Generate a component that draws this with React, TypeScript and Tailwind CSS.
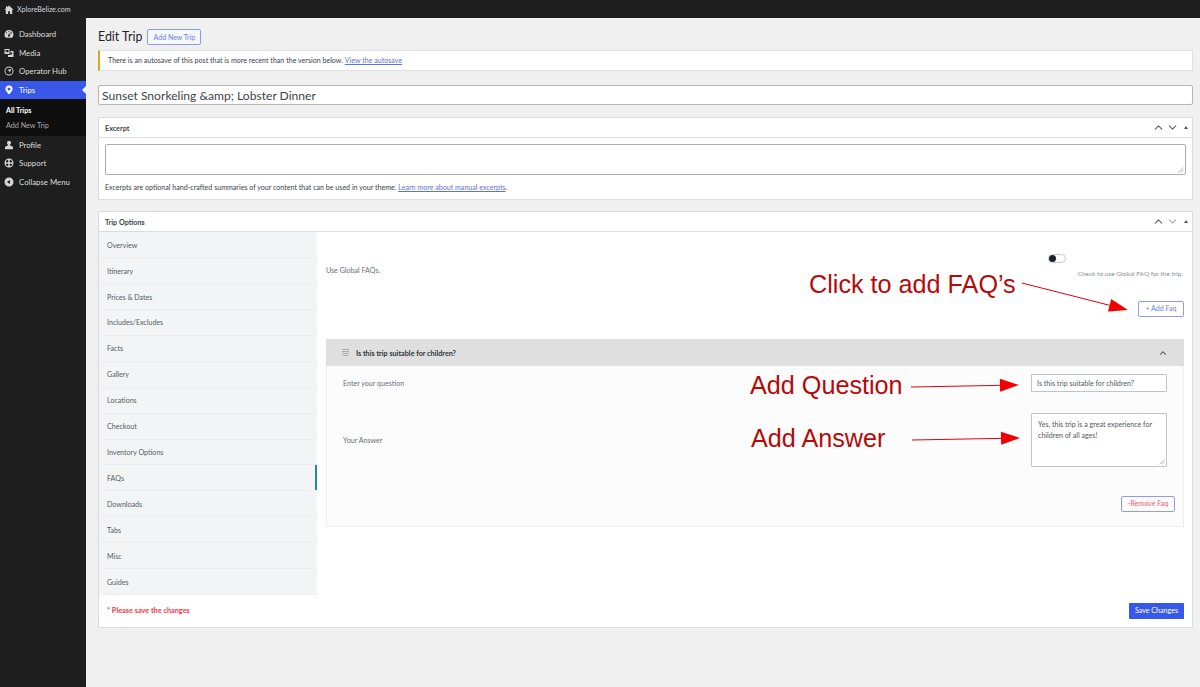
import { ChevronUp, ChevronDown } from 'lucide-react';

const tabs = ['Overview', 'Itinerary', 'Prices & Dates', 'Includes/Excludes', 'Facts', 'Gallery', 'Locations', 'Checkout', 'Inventory Options', 'FAQs', 'Downloads', 'Tabs', 'Misc', 'Guides'];

// Small filled admin menu icons, drawn on a 20x20 box
const icons: Record<string, React.ReactNode> = {
    home: <path d="M10 1 L19 9.5 L16.5 9.5 L16.5 18 L11.8 18 L11.8 12.5 L8.2 12.5 L8.2 18 L3.5 18 L3.5 9.5 L1 9.5 L4 6.7 L4 2.5 L6.5 2.5 L6.5 4.4 Z" />,
    dashboard: <path fillRule="evenodd" d="M10 2a9 9 0 0 0-9 9c0 2.6 1 4.9 2.7 6.5h12.6A9 9 0 0 0 19 11a9 9 0 0 0-9-9ZM10 4a1.2 1.2 0 1 1 0 2.4A1.2 1.2 0 0 1 10 4ZM5 6.5a1.2 1.2 0 1 1 0 2.4 1.2 1.2 0 0 1 0-2.4ZM15 6.5a1.2 1.2 0 1 1 0 2.4 1.2 1.2 0 0 1 0-2.4ZM13.6 7.5 11.5 12a2 2 0 1 1-1.4-.8L12.4 7Z" />,
    media: <path fillRule="evenodd" d="M1 2h10v10H1ZM3 4v5l2-2 2 2 2-1V4ZM13 6h6v12H8v-4h5ZM14.5 9a2 2 0 1 0 .1 4 2 2 0 0 0-.1-4Z" />,
    compass: (
        <>
            <path fillRule="evenodd" d="M10 1a9 9 0 1 1 0 18 9 9 0 0 1 0-18Zm0 1.8a7.2 7.2 0 1 0 0 14.4 7.2 7.2 0 0 0 0-14.4Z" />
            <path d="M14.5 5.5 11.8 13 10 10 7 8.2Z" />
        </>
    ),
    pin: <path fillRule="evenodd" d="M10 1a7 7 0 0 0-7 7c0 4.5 7 11 7 11s7-6.500 7-11a7 7 0 0 0-7-7Zm0 4a3 3 0 1 1 0 6 3 3 0 0 1 0-6Z" />,
    profile: <path d="M10 1.500a4 4 0 0 1 4 4c0 2-1 3.500-2.300 4.300V11c3 .5 6.300 1.800 6.300 4v3.500H2V15c0-2.200 3.300-3.500 6.300-4V9.800C7 9 6 7.500 6 5.500a4 4 0 0 1 4-4Z" />,
    support: <path fillRule="evenodd" d="M10 1a9 9 0 1 1 0 18 9 9 0 0 1 0-18ZM7.800 3.300a7 7 0 0 0-4.500 4.500L7 9a3.300 3.300 0 0 1 2-2ZM12.200 3.300 11 7a3.300 3.300 0 0 1 2 2l3.700-1.200a7 7 0 0 0-4.500-4.500ZM7 11l-3.700 1.200a7 7 0 0 0 4.500 4.500L9 13a3.300 3.300 0 0 1-2-2ZM13 11a3.300 3.300 0 0 1-2 2l1.200 3.700a7 7 0 0 0 4.500-4.500Z" />,
    collapse: <path fillRule="evenodd" d="M10 1a9 9 0 1 1 0 18 9 9 0 0 1 0-18Zm2 5-6 4 6 4Z" />,
};

function MenuIcon({ name, className }: { name: string; className?: string }) {
    return (
        <svg viewBox="0 0 20 20" className={`w-[10px] h-[10px] fill-current ${className ?? ''}`}>
            {icons[name]}
        </svg>
    );
}

function BoxControls({ downMuted }: { downMuted?: boolean }) {
    return (
        <div className="flex items-center gap-[1px] text-[#5c6167]">
            <ChevronUp className="w-[13px] h-[13px]" strokeWidth={2} />
            <ChevronDown className={downMuted ? 'w-[13px] h-[13px] text-[#a7aaad]' : 'w-[13px] h-[13px]'} strokeWidth={2} />
            <span className="ml-[4px] w-0 h-0 border-x-[2.500px] border-x-transparent border-b-[3.500px] border-b-[#50575e]" />
        </div>
    );
}

function Grip() {
    return (
        <svg viewBox="0 0 6 6" className="absolute right-[1px] bottom-[1px] w-[6px] h-[6px] stroke-[#8a8f94]" strokeWidth="0.6">
            <path d="M0.500 5.500 5.500 0.500M3 5.500 5.500 3" />
        </svg>
    );
}

function MenuItem({ icon, label }: { icon: string; label: string }) {
    return (
        <div className="h-[18.5px] flex items-center pl-[4px] gap-[5px] text-[7.800px] text-[#dcdcdc]">
            <span className="w-[10px] flex justify-center text-[#d4d4d4]"><MenuIcon name={icon} /></span>
            <span className="pt-[2px]">{label}</span>
        </div>
    );
}

function Arrow({ x1, y1, x2, y2 }: { x1: number; y1: number; x2: number; y2: number }) {
    // thin line with a filled head, same shape as the annotation arrows
    const a = Math.atan2(y2 - y1, x2 - x1);
    const len = 19;
    const w = 6.5;
    const bx = x2 - Math.cos(a) * len;
    const by = y2 - Math.sin(a) * len;
    const nx = -Math.sin(a) * w;
    const ny = Math.cos(a) * w;
    return (
        <>
            <line x1={x1} y1={y1} x2={bx} y2={by} stroke="#e3000f" strokeWidth="1" />
            <polygon points={`${x2},${y2} ${bx + nx},${by + ny} ${bx - nx},${by - ny}`} fill="#f00000" />
        </>
    );
}

export default function App() {
    return (
        <div className="relative w-[1200px] h-[687px] overflow-hidden bg-[#f0f0f1] font-['Lato','Liberation_Sans',sans-serif] text-[#3c434a]">
            {/* Top bar */}
            <div className="h-[18px] bg-[#1e1e1e] flex items-center pl-[4px] pt-[2px] gap-[3px] text-[7.100px] text-[#d5d7d9]">
                <MenuIcon name="home" className="text-[#d4d4d4]" />
                <span className="pt-[1px]">XploreBelize.com</span>
            </div>

            <div className="flex h-[669px]">
                {/* Sidebar */}
                <div className="w-[86px] shrink-0 bg-[#1e1e1e] pt-[7px]">
                    <MenuItem icon="dashboard" label="Dashboard" />
                    <MenuItem icon="media" label="Media" />
                    <MenuItem icon="compass" label="Operator Hub" />
                    <div className="relative h-[18px] bg-[#3858e9] flex items-center pl-[4px] gap-[5px] text-[7.800px] text-white">
                        <span className="w-[10px] flex justify-center"><MenuIcon name="pin" /></span>
                        <span className="pt-[2px]">Trips</span>
                        <span className="absolute right-0 top-[5px] w-0 h-0 border-y-[4px] border-y-transparent border-r-[4px] border-r-[#f0f0f1]" />
                    </div>
                    <div className="h-[37px] bg-[#0f0f0f] pl-[6px] pt-[4px] text-[7.200px] leading-[15px]">
                        <div className="font-bold text-white">All Trips</div>
                        <div className="text-[#a7aaad]">Add New Trip</div>
                    </div>
                    <MenuItem icon="profile" label="Profile" />
                    <MenuItem icon="support" label="Support" />
                    <MenuItem icon="collapse" label="Collapse Menu" />
                </div>

                {/* Main */}
                <div className="flex-1 pl-[12px] pr-[7px] pt-[11px]">
                    <div className="flex items-center gap-[5px] h-[16px]">
                        <h1 className="text-[12.400px] text-[#1d2327]">Edit Trip</h1>
                        <span className="w-[54px] h-[16px] pt-[1px] flex items-center justify-center border border-[#8f9bee] rounded-[2px] bg-[#f6f7f7] text-[7px] text-[#6f7fe8]">Add New Trip</span>
                    </div>

                    <div className="mt-[5px] h-[21px] pt-[2px] bg-white border border-[#e0e0e0] border-l-[2px] border-l-[#dba617] flex items-center pl-[8px] text-[7.100px]">
                        <span>There is an autosave of this post that is more recent than the version below.&nbsp;</span>
                        <span className="text-[#5b6fe6] underline">View the autosave</span>
                    </div>

                    <div className="mt-[14px] h-[20px] pt-[3px] bg-white border border-[#b5b5b5] rounded-[2px] flex items-center pl-[3px] text-[12.100px] text-[#3c434a]">
                        Sunset Snorkeling &amp;amp; Lobster Dinner
                    </div>

                    {/* Excerpt */}
                    <div className="mt-[12px] h-[83px] bg-white border border-[#dcdcde]">
                        <div className="h-[20px] border-b border-[#dcdcde] flex items-center justify-between pl-[6px] pr-[4px]">
                            <span className="pt-[3px] text-[7.200px] font-bold text-[#3c434a]">Excerpt</span>
                            <BoxControls />
                        </div>
                        <div className="px-[6px] pt-[6px]">
                            <div className="relative h-[31px] border border-[#a9adb1] rounded-[2px]">
                                <Grip />
                            </div>
                            <p className="mt-[8px] text-[7.100px] leading-[9px]">
                                Excerpts are optional hand-crafted summaries of your content that can be used in your theme.{' '}
                                <span className="text-[#5b6fe6] underline">Learn more about manual excerpts</span>.
                            </p>
                        </div>
                    </div>

                    {/* Trip Options */}
                    <div className="mt-[11px] h-[417px] bg-white border border-[#dcdcde]">
                        <div className="h-[20px] border-b border-[#dcdcde] flex items-center justify-between pl-[6px] pr-[4px]">
                            <span className="pt-[3px] text-[7.200px] font-bold text-[#3c434a]">Trip Options</span>
                            <BoxControls downMuted />
                        </div>
                        <div className="flex">
                            <div className="w-[218px] shrink-0">
                                {tabs.map(tab => (
                                    <div key={tab} className="relative h-[25.950px] pt-[3px] bg-[#f3f4f6] border-b border-[#eceef0] flex items-center pl-[8px] text-[7.100px] text-[#555c62]">
                                        {tab}
                                        {tab === 'FAQs' && <span className="absolute right-0 top-0 bottom-0 w-[2px] bg-[#2a83a8]" />}
                                    </div>
                                ))}
                            </div>
                            <div className="flex-1 pl-[9px] pr-[8px]">
                                <div className="h-[107px] relative">
                                    <div className="pt-[34px] text-[7.100px] text-[#6a7076]">Use Global FAQs.</div>
                                    <div className="absolute right-[118px] top-[22px] w-[18px] h-[9px] border border-[#c8c8c8] rounded-full bg-white">
                                        <span className="block w-[7px] h-[7px] rounded-full bg-[#1d2327]" />
                                    </div>
                                    <span className="absolute right-[1px] top-[37px] text-[6.500px] text-[#8a8f94]">Check to use Global FAQ for the trip.</span>
                                    <span className="absolute right-0 top-[69px] w-[46px] h-[16px] pt-[1px] flex items-center justify-center border border-[#8f9bee] rounded-[2px] text-[7.100px] text-[#6f7fe8]">+ Add Faq</span>
                                </div>
                                <div className="h-[188px] bg-[#fcfcfc] border border-[#eeeeee] border-t-0">
                                    <div className="h-[27px] -mx-px bg-[#dfdfdf] flex items-center justify-between pl-[15px] pr-[16px]">
                                        <div className="flex items-center gap-[6px]">
                                            <svg viewBox="0 0 9 9" className="w-[9px] h-[9px] stroke-[#9a9ea2]" strokeWidth="0.8">
                                                <path d="M1 1.500h7M1 3.500h7M1 5.500h7M2 7.500h5" />
                                            </svg>
                                            <span className="pt-[3px] text-[7.200px] font-bold text-[#2c3338]">Is this trip suitable for children?</span>
                                        </div>
                                        <ChevronUp className="w-[10px] h-[10px] text-[#3c434a]" strokeWidth={2.5} />
                                    </div>
                                    <div className="flex justify-between pl-[16px] pr-[16px] pt-[8px]">
                                        <span className="text-[7.100px] text-[#6a7076] pt-[5px]">Enter your question</span>
                                        <div className="w-[136px] h-[18px] pt-[2px] bg-white border border-[#c0c3c7] rounded-[1px] flex items-center pl-[5px] text-[7.100px] text-[#50575e]">Is this trip suitable for children?</div>
                                    </div>
                                    <div className="flex justify-between pl-[16px] pr-[16px] mt-[21px]">
                                        <span className="text-[7.100px] text-[#6a7076] pt-[23px]">Your Answer</span>
                                        <div className="relative w-[136px] h-[54px] bg-white border border-[#c0c3c7] rounded-[1px] px-[6px] pt-[6px] text-[7.100px] leading-[10.500px] text-[#50575e]">
                                            Yes, this trip is a great experience for children of all ages!
                                            <Grip />
                                        </div>
                                    </div>
                                    <div className="flex justify-end pr-[8px] mt-[29px]">
                                        <span className="w-[54px] h-[16px] pt-[1px] flex items-center justify-center border border-[#8f9bee] rounded-[2px] text-[7.100px] text-[#f0575e]">-Remove Faq</span>
                                    </div>
                                </div>
                            </div>
                        </div>
                        <div className="flex items-center justify-between pl-[8px] pr-[8px] pt-[8px]">
                            <span className="text-[7.300px] font-bold text-[#f0383f]">* Please save the changes</span>
                            <span className="w-[55px] h-[16px] pt-[1px] flex items-center justify-center rounded-[1px] bg-[#3858e9] text-[7.100px] text-white">Save Changes</span>
                        </div>
                    </div>
                </div>
            </div>

            {/* Red annotations over the screenshot */}
            <span className="absolute left-[809px] top-[270px] text-[25.200px] leading-[28px] text-[#b60a0a] font-['Liberation_Sans',sans-serif]">Click to add FAQ’s</span>
            <span className="absolute left-[750px] top-[371px] text-[25.200px] leading-[28px] text-[#b60a0a] font-['Liberation_Sans',sans-serif]">Add Question</span>
            <span className="absolute left-[751px] top-[424px] text-[25.200px] leading-[28px] text-[#b60a0a] font-['Liberation_Sans',sans-serif]">Add Answer</span>
            <svg className="absolute left-0 top-0 pointer-events-none" width="1200" height="687">
                <Arrow x1={1022} y1={283} x2={1128} y2={310} />
                <Arrow x1={911} y1={387} x2={1019} y2={385} />
                <Arrow x1={912} y1={440} x2={1020} y2={438} />
            </svg>
        </div>
    );
}
